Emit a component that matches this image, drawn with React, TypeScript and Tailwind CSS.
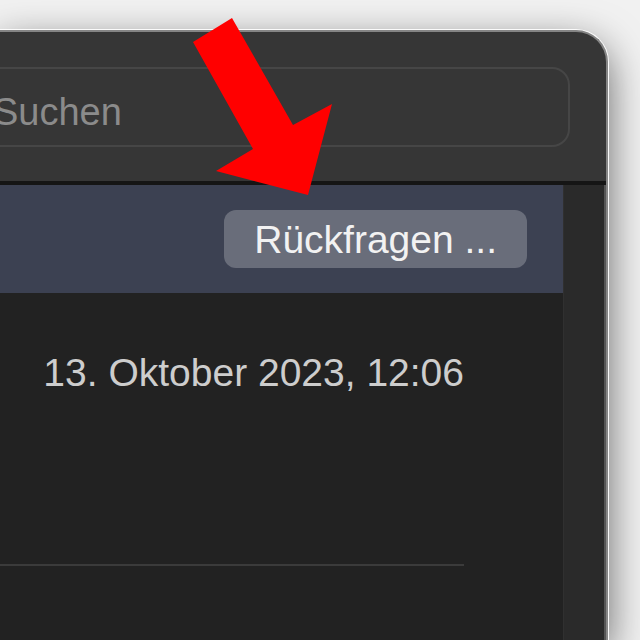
import React from 'react';

// Red annotation arrow pointing at the button
const Arrow = () => (
  <svg className="absolute inset-0 pointer-events-none" width="640" height="640" viewBox="0 0 640 640">
    <polygon points="193,42 232,18 293,125 332,104 308,195 216,171 253,149" fill="#ff0000" />
  </svg>
);

const App = () => {
  return (
    <div className="relative w-[640px] h-[640px] overflow-hidden bg-[#f1f1f1] pt-[30px] pr-[32px] flex font-['Liberation_Sans',Arial,sans-serif]">
      <div className="flex-1 flex flex-col rounded-tr-[32px] border-t-2 border-r-2 border-[#858585] bg-[#363636] overflow-hidden shadow-[0_0_0_1px_rgba(255,255,255,0.9),0_14px_40px_rgba(0,0,0,0.6)]">
        {/* toolbar with search field */}
        <div className="h-[149px] shrink-0 flex items-center pr-[36px]">
          <div className="flex-1 h-[80px] -ml-[40px] pl-[31px] flex items-center rounded-[18px] border-2 border-[#464646] bg-[#363636]">
            <span className="mt-[10px] text-[38px] leading-none text-[#8b8b8b]">Suchen</span>
          </div>
        </div>
        <div className="h-[4px] shrink-0 bg-[#151515]" />

        <div className="flex-1 flex">
          <div className="flex-1 flex flex-col">
            <div className="h-[108px] shrink-0 bg-[#3c4152] flex items-center justify-end pr-[36px]">
              <button className="h-[58px] px-[30px] rounded-[12px] bg-[#696d7a] text-[39px] leading-none text-[#f2f2f2] font-medium flex items-center">
                Rückfragen ...
              </button>
            </div>
            <div className="flex-1 bg-[#222222] pr-[99px] pt-[60px] flex flex-col">
              <div className="text-right text-[39px] leading-none text-[#cdcdcd]">13. Oktober 2023, 12:06</div>
              <div className="mt-[172px] h-[2px] bg-[#3b3b3b]" />
            </div>
          </div>
          <div className="w-[43px] shrink-0 bg-[#2a2a2a] border-l border-[#303030] border-r-2 border-r-[#555555]" />
        </div>
      </div>
      <Arrow />
    </div>
  );
};

export default App;
